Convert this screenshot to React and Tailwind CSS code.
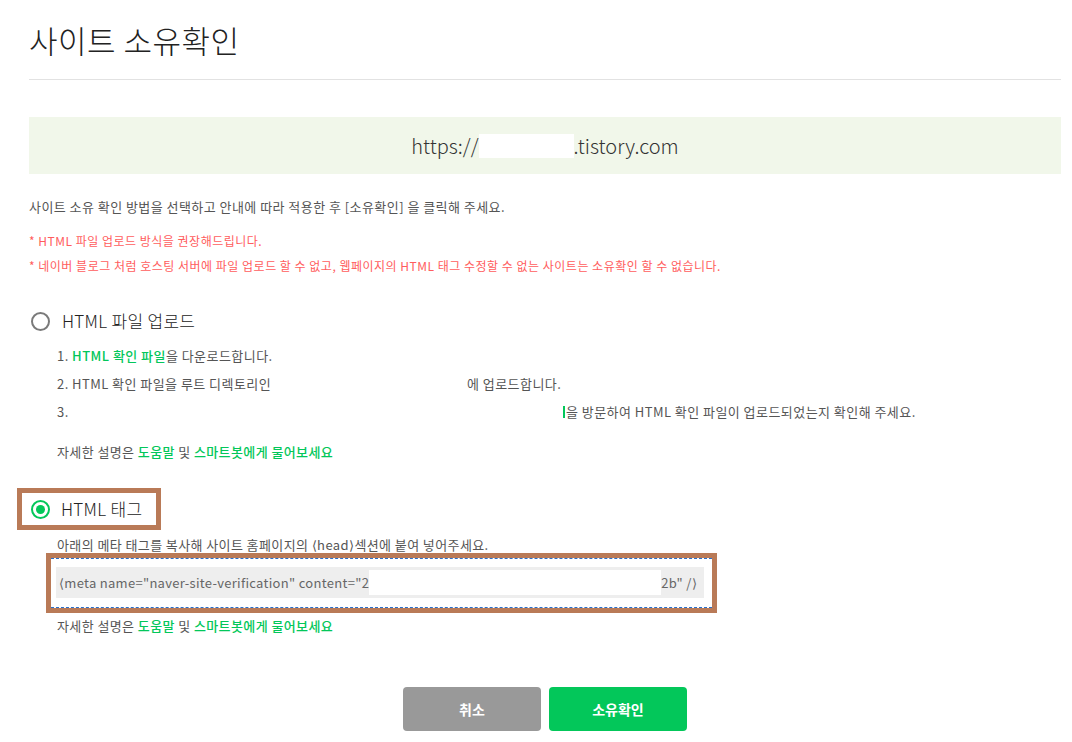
import React from 'react';

const Radio = ({ checked }) =>
  checked ? (
    <span className="w-[19px] h-[19px] rounded-full border-2 border-[#03c75a] flex items-center justify-center">
      <span className="w-[9px] h-[9px] rounded-full bg-[#03c75a]"></span>
    </span>
  ) : (
    <span className="w-[19px] h-[19px] rounded-full border-2 border-[#7a7a7a]"></span>
  );

const HelpLine = () => (
  <p className="text-[13px] leading-[20px] tracking-[0.4px] text-[#555]">
    자세한 설명은 <span className="text-[#03c75a] font-medium">도움말</span> 및{' '}
    <span className="text-[#03c75a] font-medium">스마트봇에게 물어보세요</span>
  </p>
);

export default function App() {
  return (
    <div className="min-h-[742px] bg-white pl-[29px] pr-[11px] font-['Noto_Sans_CJK_KR','Noto_Sans',sans-serif]">
      {/* Header */}
      <div className="border-b border-[#e2e2e2] pt-[20px] pb-[19px]">
        <h1 className="text-[31px] leading-[40px] font-light tracking-[0.5px] text-[#222]">사이트 소유확인</h1>
      </div>

      {/* Site url */}
      <div className="mt-[37px] h-[57px] bg-[#f1f7ea] flex items-center justify-center text-[20px] font-light text-[#333]">
        <span>https://</span>
        <span className="inline-block w-[95px] h-[24px] bg-white"></span>
        <span>.tistory.com</span>
      </div>

      <p className="mt-[23px] text-[13px] leading-[20px] tracking-[0.45px] text-[#555]">
        사이트 소유 확인 방법을 선택하고 안내에 따라 적용한 후 [소유확인] 을 클릭해 주세요.
      </p>
      <div className="mt-[11px] text-[12px] leading-[25px] tracking-[0.5px] text-[#ff5d5d]">
        <p>* HTML 파일 업로드 방식을 권장해드립니다.</p>
        <p>* 네이버 블로그 처럼 호스팅 서버에 파일 업로드 할 수 없고, 웹페이지의 HTML 태그 수정할 수 없는 사이트는 소유확인 할 수 없습니다.</p>
      </div>

      {/* HTML file upload */}
      <div className="mt-[28px] h-[30px] flex items-center gap-[12px] pl-[2px]">
        <Radio />
        <span className="text-[17px] font-light tracking-[0.3px] text-[#222]">HTML 파일 업로드</span>
      </div>
      <div className="ml-[28px] mt-[6px] text-[13px] leading-[28px] tracking-[0.45px] text-[#555]">
        <p>
          1. <span className="text-[#03c75a] font-medium">HTML 확인 파일</span>을 다운로드합니다.
        </p>
        <p className="flex">
          <span className="inline-block w-[410px] shrink-0">2. HTML 확인 파일을 루트 디렉토리인</span>
          <span>에 업로드합니다.</span>
        </p>
        <p className="flex items-center">
          <span className="inline-block w-[506px] shrink-0">3.</span>
          <span className="inline-block w-[2px] h-[12px] bg-[#03c75a] mr-[1px]"></span>
          <span>을 방문하여 HTML 확인 파일이 업로드되었는지 확인해 주세요.</span>
        </p>
        <div className="mt-[16px]">
          <HelpLine />
        </div>
      </div>

      {/* HTML tag */}
      <div className="mt-[26px] ml-[-12px] inline-flex h-[42px] items-center gap-[11px] border-[5px] border-[#b97a57] pl-[9px] pr-[14px]">
        <Radio checked />
        <span className="text-[17px] font-light tracking-[0.3px] text-[#222]">HTML 태그</span>
      </div>
      <div className="ml-[28px]">
        <p className="mt-[7px] text-[13px] leading-[16px] tracking-[0.4px] text-[#555]">
          아래의 메타 태그를 복사해 사이트 홈페이지의 ⟨head⟩섹션에 붙여 넣어주세요.
        </p>
      </div>
      <div className="ml-[17px] w-[671px] h-[60px] border-[5px] border-[#b97a57] bg-white">
        <div className="h-full border-y border-dashed border-[#2a6fc9] pl-[5px] pt-[8px]">
          <div className="w-[648px] h-[31px] bg-[#eeeeee] flex items-center pl-[3px] text-[13px] tracking-[0.3px] text-[#666] overflow-hidden whitespace-nowrap">
            <span>⟨meta name="naver-site-verification" content="2</span>
            <span className="inline-block w-[292px] h-[25px] bg-white"></span>
            <span>2b" /⟩</span>
          </div>
        </div>
      </div>
      <div className="ml-[28px] mt-[3px]">
        <HelpLine />
      </div>

      {/* Buttons */}
      <div className="mt-[51px] flex justify-center gap-[8px]">
        <button className="w-[138px] h-[44px] rounded-[4px] bg-[#999] text-white text-[14px] font-bold">취소</button>
        <button className="w-[138px] h-[44px] rounded-[4px] bg-[#03c75a] text-white text-[14px] font-bold">소유확인</button>
      </div>
    </div>
  );
}
